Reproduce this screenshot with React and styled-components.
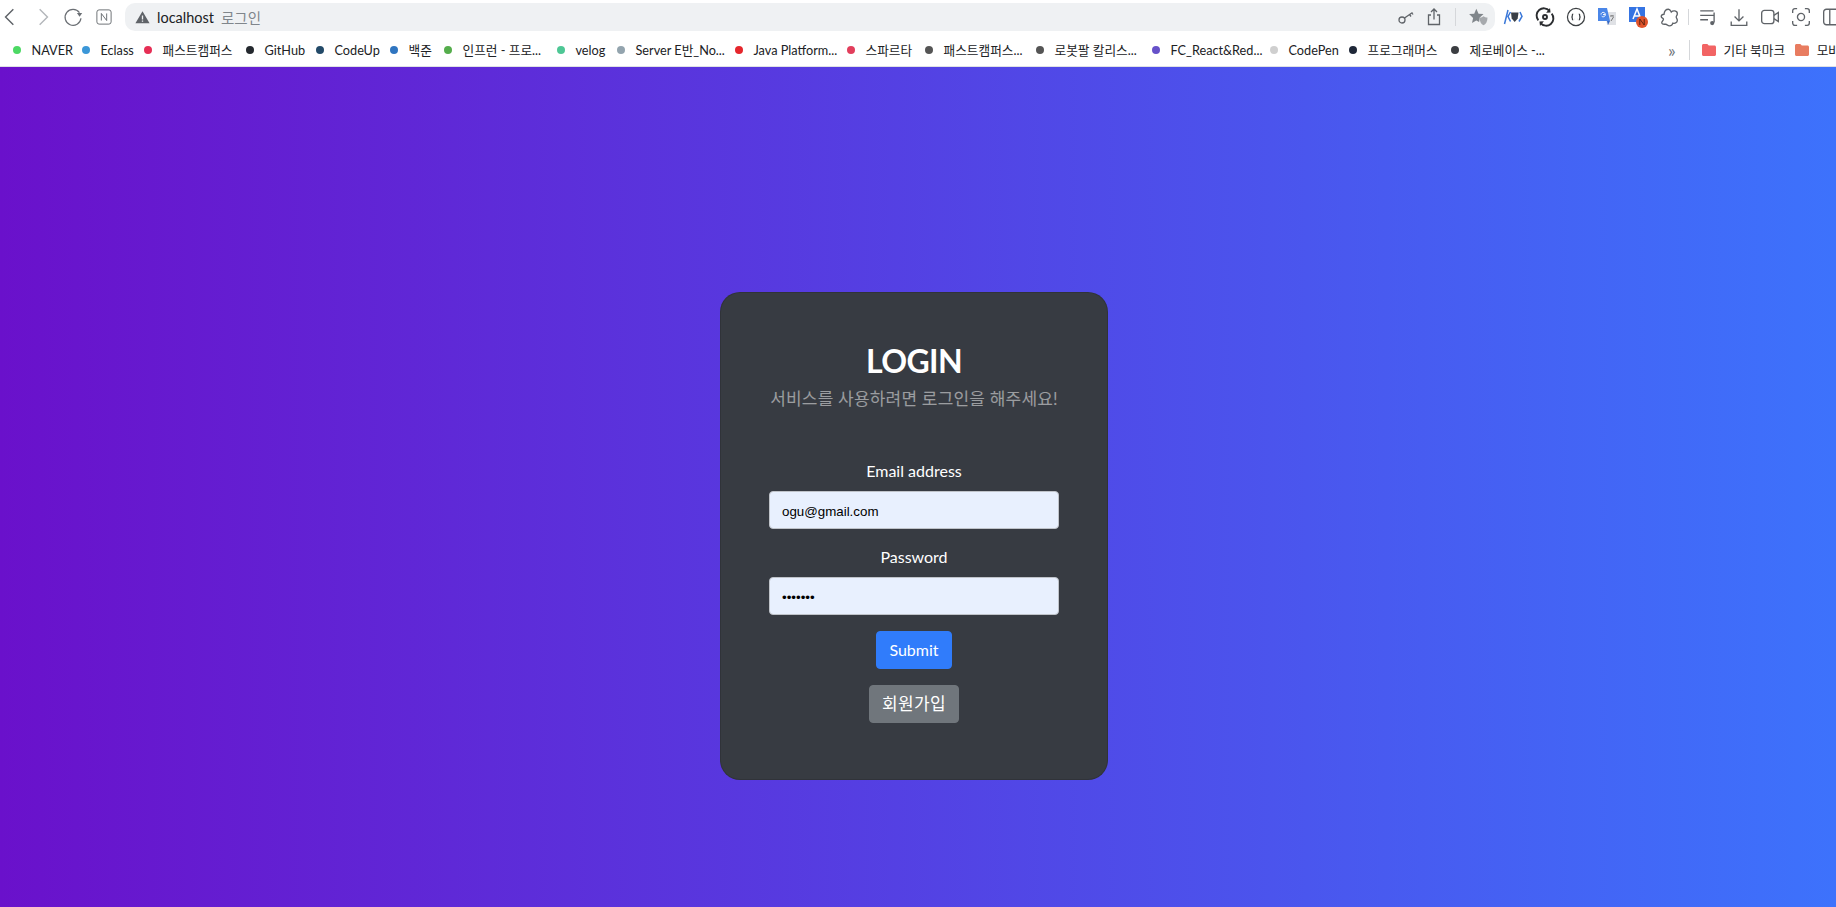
import React from 'react';
import styled, { createGlobalStyle } from 'styled-components';

const GlobalStyle = createGlobalStyle`
  html, body {
    margin: 0;
    padding: 0;
    background: #fff;
    overflow: hidden;
  }
  body {
    font-family: Lato, "Noto Sans CJK KR", sans-serif;
  }
  * {
    box-sizing: border-box;
  }
  svg {
    flex: none;
  }
`;

const bookmarks = [
  { name: 'NAVER', color: '#4cd964', w: 69 },
  { name: 'Eclass', color: '#3b97d8', w: 62 },
  { name: '패스트캠퍼스', color: '#e62e55', w: 102 },
  { name: 'GitHub', color: '#24292e', w: 70 },
  { name: 'CodeUp', color: '#234a68', w: 74 },
  { name: '백준', color: '#2f75c0', w: 54 },
  { name: '인프런 - 프로...', color: '#55ad4c', w: 113 },
  { name: 'velog', color: '#4ec795', w: 60 },
  { name: 'Server E반_No...', color: '#93a4ae', w: 118 },
  { name: 'Java Platform...', color: '#e5262c', w: 112 },
  { name: '스파르타', color: '#e23e5c', w: 78 },
  { name: '패스트캠퍼스...', color: '#555555', w: 111 },
  { name: '로봇팔 칼리스...', color: '#555555', w: 116 },
  { name: 'FC_React&Red...', color: '#6651c9', w: 118 },
  { name: 'CodePen', color: '#cfcfcf', w: 79 },
  { name: '프로그래머스', color: '#1e2738', w: 102 },
  { name: '제로베이스 -...', color: '#3b3d42', w: 217 }
];

const Chrome = styled.header`
  height: 67px;
  background: #fff;
  border-bottom: 1px solid #dfe1e5;
  overflow: hidden;
`;

const Toolbar = styled.div`
  display: flex;
  align-items: center;
  height: 33px;
  width: 1860px;
  padding-top: 1px;
`;

const NavIcon = styled.span`
  display: flex;
  justify-content: center;
  align-items: center;
  flex: none;
  width: ${(p) => p.$w || 31}px;
  height: 30px;
  margin-left: ${(p) => p.$ml || 0}px;
  color: ${(p) => p.$color || '#5f6368'};
`;

const Omnibox = styled.div`
  display: flex;
  align-items: center;
  flex: none;
  width: 1370px;
  height: 28px;
  margin: 0 3px 0 12px;
  padding-left: 10px;
  border-radius: 10px;
  background: #eff1f3;
`;

const Host = styled.span`
  margin-left: 7px;
  font-size: 14.5px;
  color: #202124;
`;

const PageTitle = styled.span`
  margin-left: 7px;
  font-size: 14.5px;
  color: #80868b;
`;

const OmniActions = styled.div`
  display: flex;
  align-items: center;
  margin-left: auto;
  padding-right: 1px;
`;

const Divider = styled.span`
  flex: none;
  width: 1px;
  height: ${(p) => p.$h || 18}px;
  margin: 0 ${(p) => p.$m || 4}px;
  background: #d5d7da;
`;

const BookmarkBar = styled.nav`
  display: flex;
  align-items: center;
  height: 33px;
  width: 1860px;
  padding-left: 13px;
  font-size: 12.7px;
  color: #202124;
`;

const Bookmark = styled.a`
  display: flex;
  align-items: center;
  flex: none;
  gap: 10.5px;
  width: ${(p) => p.$w}px;
  white-space: nowrap;
`;

const Dot = styled.i`
  flex: none;
  width: 8px;
  height: 8px;
  border-radius: 50%;
  background: ${(p) => p.$color};
`;

const FolderItem = styled.a`
  display: flex;
  align-items: center;
  flex: none;
  gap: 7.5px;
  margin-right: 10px;
  white-space: nowrap;
`;

const More = styled.span`
  flex: none;
  width: 9px;
  font-size: 18px;
  line-height: 18px;
  color: #70757a;
`;

const Page = styled.main`
  display: flex;
  justify-content: center;
  height: 840px;
  padding: 225px 8px 0 0;
  background: linear-gradient(to right, #6a11cb, #3d72fc);
`;

const Card = styled.section`
  display: flex;
  flex-direction: column;
  align-items: center;
  width: 388px;
  height: 488px;
  padding: 48px;
  border: 1px solid rgba(0, 0, 0, 0.125);
  border-radius: 20px;
  background: #373b42;
  text-align: center;
  color: #fff;
`;

const Title = styled.h2`
  margin: 0 0 6px;
  font-size: 32px;
  font-weight: 700;
  line-height: 40.4px;
  letter-spacing: -0.6px;
`;

const Subtitle = styled.p`
  margin: 0 0 48px;
  font-size: 17px;
  line-height: 24px;
  letter-spacing: 0.2px;
  white-space: nowrap;
  color: rgba(255, 255, 255, 0.5);
`;

const Form = styled.form`
  display: flex;
  flex-direction: column;
  align-items: center;
  width: 100%;
`;

const Label = styled.label`
  margin-bottom: 8px;
  font-size: 16px;
  line-height: 24px;
`;

const Input = styled.input`
  display: block;
  width: 100%;
  height: 38px;
  margin-bottom: 16px;
  padding: 9px 12px 6px;
  border: 1px solid #bfc3c9;
  border-radius: 4px;
  outline: none;
  background: #e8f0fe;
  font-family: "Liberation Sans", sans-serif;
  font-size: 13.33px;
  color: #000;
`;

const Button = styled.button`
  height: 38px;
  margin-bottom: 16px;
  padding: 6px 12px;
  border: 1px solid ${(p) => p.$bg};
  border-radius: 4px;
  background: ${(p) => p.$bg};
  font-family: inherit;
  font-size: ${(p) => p.$size || 16}px;
  letter-spacing: ${(p) => p.$spacing || 0}px;
  line-height: 24px;
  color: #fff;
`;

const Svg = ({ size = 18, children, fill = 'none', sw = 1.3 }) => (
  <svg width={size} height={size} viewBox="0 0 18 18" fill={fill} stroke={fill === 'none' ? 'currentColor' : 'none'} strokeWidth={sw}>
    {children}
  </svg>
);

const Folder = ({ color }) => (
  <svg width="14" height="12" viewBox="0 0 14 12">
    <path d="M1.500 0h3.800l1.500 1.600h5.700c.8 0 1.500.7 1.500 1.500v7.400c0 .8-.7 1.500-1.500 1.500h-11C.7 12 0 11.300 0 10.500v-9C0 .7.7 0 1.500 0z" fill={color} />
  </svg>
);

const App = () => {
  return (
    <>
      <GlobalStyle />
      <Chrome>
        <Toolbar>
          <NavIcon $w={20}>
            <Svg size={20}><path d="M12 2 5 9l7 7" /></Svg>
          </NavIcon>
          <NavIcon $w={20} $ml={13} $color="#b4b7bb">
            <Svg size={20}><path d="m6 2 7 7-7 7" /></Svg>
          </NavIcon>
          <NavIcon $w={22} $ml={9} $color="#6b6f74">
            <Svg size={22} sw={1}>
              <path d="M14.300 5.500A6.500 6.500 0 1 0 15.500 10" />
              <path d="M16.500 5.800h-4.300l2.200 3z" fill="currentColor" stroke="none" />
            </Svg>
          </NavIcon>
          <NavIcon $w={18} $ml={11}>
            <Svg size={16} sw={1}>
              <rect x="1" y="1" width="16" height="16" rx="2.500" />
              <path d="M6 13V5l6 8V5" />
            </Svg>
          </NavIcon>
          <Omnibox>
            <Svg size={15} fill="#5f6368"><path d="M9 1.500 17.500 16H.5zM8.200 6.500v5h1.600v-5zm0 6.200V14h1.600v-1.300z" fillRule="evenodd" /></Svg>
            <Host>localhost</Host>
            <PageTitle>로그인</PageTitle>
            <OmniActions>
              <NavIcon $w={28}>
                <Svg><circle cx="5" cy="12" r="3" /><path d="m7.500 10 8-5.500M12.500 6.500l1.500 2M15 5l1 1.500" /></Svg>
              </NavIcon>
              <NavIcon $w={28}>
                <Svg><path d="M6 7H3.500v9.500h11V7H12M9 11.500V1.500M6 4l3-3 3 3" /></Svg>
              </NavIcon>
              <Divider $m={6.500} />
              <NavIcon $w={32} $color="#80868b">
                <Svg size={20} fill="#80868b">
                  <path d="M7.500 1.500 9.500 6l4.500.4-3.400 3-.6 4.100-2.500-1.300-3.900 2.200 1-4.600L1 6.400 5.600 6z" />
                  <path d="M10.500 9.500c1.500 0 2.500-.6 3.500-1.200 1 .6 2 1.200 3.500 1.200 0 4-1.500 6-3.500 7-2-1-3.500-3-3.500-7z" fill="#a6a9ad" />
                </Svg>
              </NavIcon>
            </OmniActions>
          </Omnibox>
          <NavIcon>
            <svg width="22" height="16" viewBox="0 0 22 16" fill="none" strokeWidth="1.500">
              <path d="M5 1 1.500 15M7.500 3 5 7.500l2.500 5M17 3l2 4.500-3 5" stroke="#3b78d8" />
              <path d="M8 3.500h7.500l-.8 6-3 3.500-3-3.500z" fill="#3a3f46" />
            </svg>
          </NavIcon>
          <NavIcon $color="#2b2d30">
            <Svg size={20} sw={1.700}>
              <path d="M3 12A6.500 6.500 0 0 1 13 3.500M15 6A6.500 6.500 0 0 1 5 14.500" />
              <circle cx="9" cy="9" r="1.800" />
              <path d="m13.500 1 .5 4-4 .2zM4.500 17l-.5-4 4-.2z" fill="currentColor" stroke="none" />
            </Svg>
          </NavIcon>
          <NavIcon $color="#3c4043">
            <Svg size={20} sw={1.100}>
              <circle cx="9" cy="9" r="7.700" />
              <path d="M6.500 6.500c-1 0-.8 1-.8 1.600 0 .6-.6.9-.9.9.300 0 .9.300.9.900 0 .6-.2 1.600.8 1.600M11.500 6.500c1 0 .8 1 .8 1.600 0 .6.600.9.900.9-.300 0-.9.300-.9.900 0 .6.200 1.600-.8 1.600M8 11h.1M10 11h.1" />
            </Svg>
          </NavIcon>
          <NavIcon>
            <svg width="20" height="20" viewBox="0 0 20 20">
              <path d="M8 5h11v13H10z" fill="#dfe1e5" />
              <path d="M1 1h9l3 13H1z" fill="#4a86e8" />
              <path d="M10 14h3l-2 4z" fill="#3367c6" />
              <path d="M4 7.500a2.200 2.200 0 1 1 .7 1.700M6 7.600h2" stroke="#fff" strokeWidth="1" fill="none" />
              <path d="M13 9h4M15 8v1M14 14l2.500-4" stroke="#777" strokeWidth="1" fill="none" />
            </svg>
          </NavIcon>
          <NavIcon>
            <svg width="20" height="22" viewBox="0 0 20 22">
              <rect x="1" y="1" width="16" height="15" fill="#3574e3" />
              <path d="m5 13 4-10 4 10M6.500 10h5" stroke="#fff" strokeWidth="1.500" fill="none" />
              <circle cx="14" cy="16" r="6" fill="#e0532a" />
              <path d="M11.800 19v-6l4.400 6v-6" stroke="#5b2412" strokeWidth="1" fill="none" />
            </svg>
          </NavIcon>
          <NavIcon>
            <Svg size={20} sw={1.200}>
              <path d="M2 8.500c0-1.500 1-2 2.500-2 .2-2 1.500-4.500 4-4.500 1.500 0 2 1.500 2.500 2.500C12.500 3 16.500 3 16.500 6c0 1.500-1 2-1 3s1 1.500 1 3c0 2.500-2.500 3-4 2.500-.5 1.500-1.500 2.500-3 2.500-2 0-2-1.500-3.500-1.500S3 16 2.500 14.500c-.4-1.500 1.500-2 1.500-3.500 0-1-2-1-2-2.500z" />
            </Svg>
          </NavIcon>
          <Divider $h={16} $m={3.500} />
          <NavIcon>
            <Svg size={20} sw={1.200}>
              <path d="M2 3.500h12M2 7.500h12M2 11.500h7M14.500 5v9" />
              <circle cx="12.800" cy="14.500" r="1.900" fill="currentColor" stroke="none" />
            </Svg>
          </NavIcon>
          <NavIcon>
            <Svg size={20} sw={1.200}><path d="M9 2v10M5 8.500 9 12.500l4-4M2 13v3.500h14V13" /></Svg>
          </NavIcon>
          <NavIcon>
            <Svg size={20} sw={1.200}>
              <rect x="1.500" y="3" width="11" height="12" rx="2.500" />
              <path d="M12.500 7.500 16.500 5v8l-4-2.500" />
            </Svg>
          </NavIcon>
          <NavIcon>
            <Svg size={20} sw={1.200}>
              <path d="M1.500 5.500v-2a2 2 0 0 1 2-2h2M12.500 1.500h2a2 2 0 0 1 2 2v2M16.500 12.500v2a2 2 0 0 1-2 2h-2M5.500 16.500h-2a2 2 0 0 1-2-2v-2" />
              <circle cx="9" cy="9" r="3.200" />
            </Svg>
          </NavIcon>
          <NavIcon>
            <Svg size={20} sw={1.200}>
              <rect x="1.500" y="2" width="15" height="14" rx="2.500" />
              <path d="M7 2v14" />
            </Svg>
          </NavIcon>
        </Toolbar>
        <BookmarkBar>
          {bookmarks.map((b) => (
            <Bookmark key={b.name} $w={b.w}>
              <Dot $color={b.color} />
              {b.name}
            </Bookmark>
          ))}
          <More>»</More>
          <Divider $h={20} $m={12} />
          <FolderItem>
            <Folder color="#f26464" />
            기타 북마크
          </FolderItem>
          <FolderItem>
            <Folder color="#e87c60" />
            모바일 북마크
          </FolderItem>
        </BookmarkBar>
      </Chrome>
      <Page>
        <Card>
          <Title>LOGIN</Title>
          <Subtitle>서비스를 사용하려면 로그인을 해주세요!</Subtitle>
          <Form onSubmit={(e) => e.preventDefault()}>
            <Label htmlFor="email">Email address</Label>
            <Input id="email" type="email" defaultValue="ogu@gmail.com" />
            <Label htmlFor="password">Password</Label>
            <Input id="password" type="password" defaultValue="1234567" />
            <Button type="submit" $bg="#307cfb">Submit</Button>
            <Button type="button" $bg="#70767c" $size={17} $spacing={0.3}>회원가입</Button>
          </Form>
        </Card>
      </Page>
    </>
  );
};

export default App;
